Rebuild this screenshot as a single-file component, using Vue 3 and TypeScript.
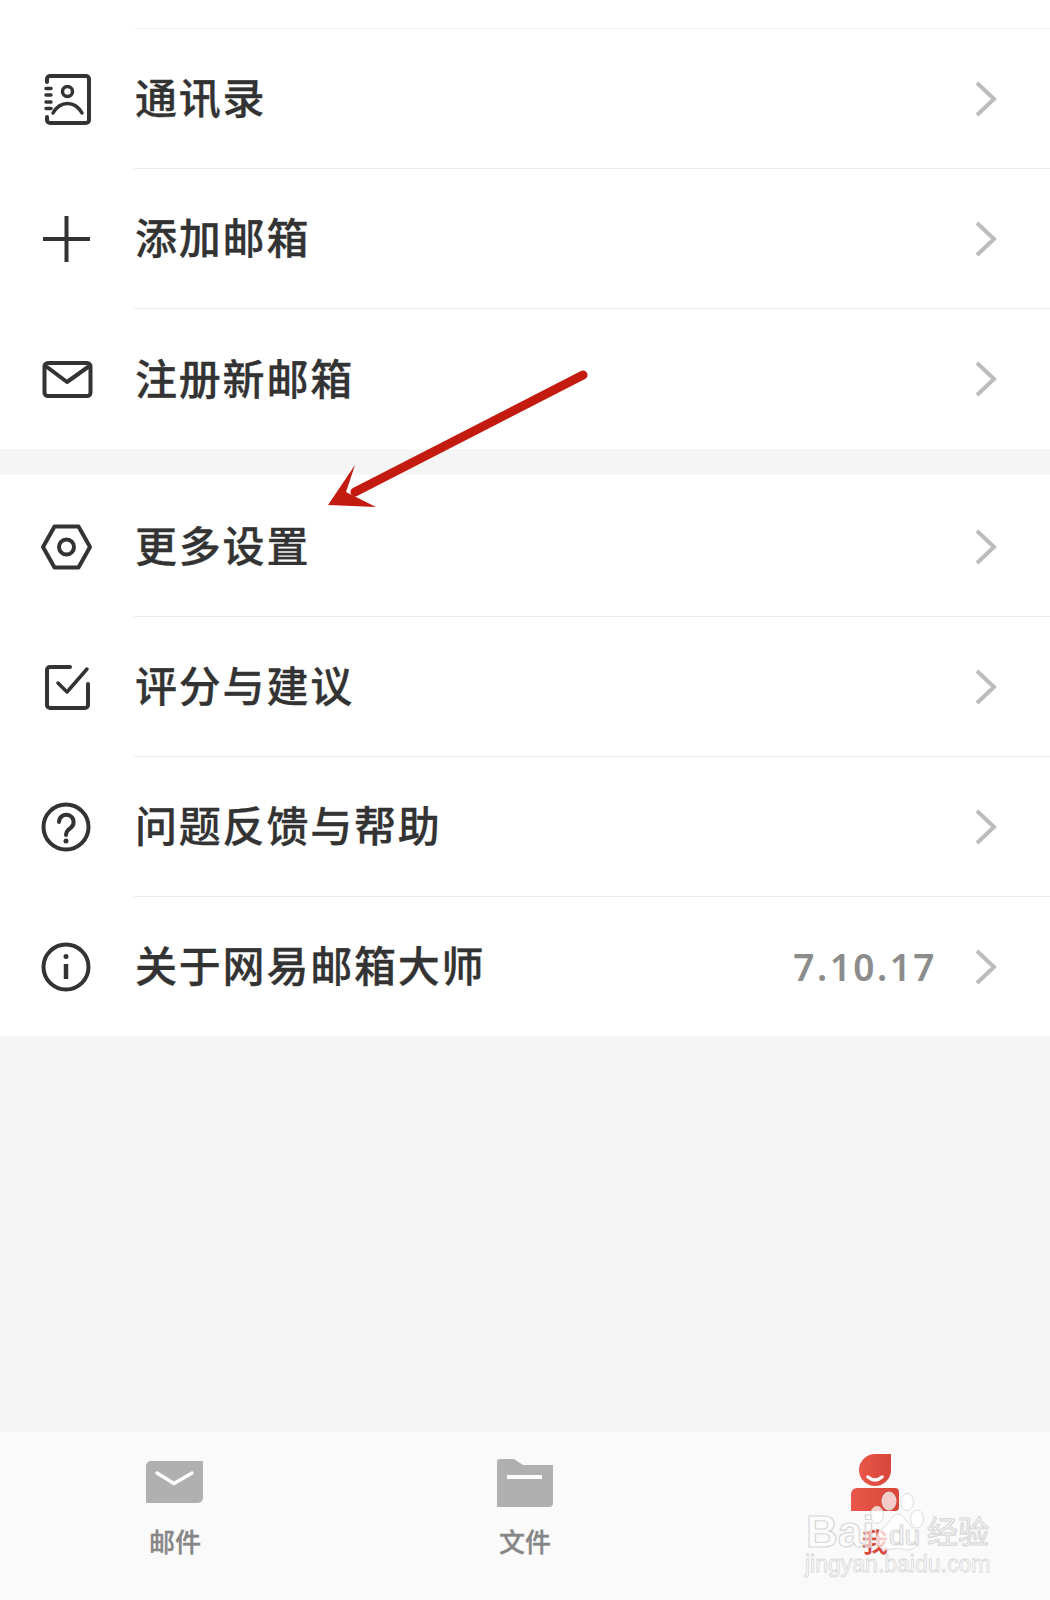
<script setup lang="ts">
interface MenuRow {
  icon: string;
  label: string;
  value?: string;
}

const topRows: MenuRow[] = [
  { icon: "contacts", label: "通讯录" },
  { icon: "plus", label: "添加邮箱" },
  { icon: "mail", label: "注册新邮箱" },
];

const bottomRows: MenuRow[] = [
  { icon: "settings", label: "更多设置" },
  { icon: "check", label: "评分与建议" },
  { icon: "help", label: "问题反馈与帮助" },
  { icon: "info", label: "关于网易邮箱大师", value: "7.10.17" },
];

const groups = [topRows, bottomRows];
</script>

<template>
  <div class="page">
    <div class="stub"><div class="stub-line"></div></div>

    <section v-for="(rows, g) in groups" :key="g" class="group">
      <div v-for="row in rows" :key="row.label" class="row">
        <svg class="row-icon" viewBox="0 0 60 60" fill="none" stroke="#333" stroke-width="4" stroke-linecap="round" stroke-linejoin="round">
          <template v-if="row.icon === 'contacts'">
            <path d="M11 13V10a3 3 0 0 1 3-3H50a3 3 0 0 1 3 3V51a3 3 0 0 1-3 3H14a3 3 0 0 1-3-3V48" />
            <path d="M10 19.500H15M10 26H15M10 33H15M10 39.500H15" stroke-width="3.500" />
            <circle cx="31.500" cy="22.500" r="5" stroke-width="3.500" />
            <path d="M17 44C21 37 26 34.500 31.500 34.500S42 37 46 44" stroke-width="3.500" />
          </template>
          <path v-else-if="row.icon === 'plus'" d="M7 30H54M30.500 7V53" stroke-linecap="butt" />
          <template v-else-if="row.icon === 'mail'">
            <rect x="8.500" y="14" width="46" height="33" rx="3.500" />
            <path d="M11 18L31 33L52 18" />
          </template>
          <template v-else-if="row.icon === 'settings'">
            <path d="M7 30L18.500 9.500H42.500L54 30L42.500 50.500H18.500Z" />
            <circle cx="30.500" cy="30" r="7.500" />
          </template>
          <template v-else-if="row.icon === 'check'">
            <path d="M34 10H14a3 3 0 0 0-3 3V48a3 3 0 0 0 3 3H49a3 3 0 0 0 3-3V27" />
            <path d="M22 26L31 35L51 12" stroke-width="3.500" />
          </template>
          <template v-else-if="row.icon === 'help'">
            <circle cx="30" cy="30" r="22.500" />
            <path d="M23 25a7.300 7.300 0 1 1 11.500 6C31.500 33 30 34.500 30 38" />
            <circle cx="30" cy="44" r="1.500" fill="#333" stroke-width="2" />
          </template>
          <template v-else>
            <circle cx="30" cy="30" r="22.500" />
            <circle cx="30" cy="19.500" r="1.500" fill="#333" stroke-width="2" />
            <path d="M30 27V42" stroke-width="4.500" stroke-linecap="butt" />
          </template>
        </svg>
        <div class="row-body">
          <span class="row-label">{{ row.label }}</span>
          <span v-if="row.value" class="row-value">{{ row.value }}</span>
          <svg class="chevron" viewBox="0 0 24 36" fill="none" stroke="#bcbcbc" stroke-width="4">
            <path d="M3 2L20 18L3 34" />
          </svg>
        </div>
      </div>
    </section>

    <div class="spacer"></div>

    <nav class="tabs">
      <div class="tab">
        <svg class="tab-icon" viewBox="0 0 60 60">
          <path d="M1 9H58V46a5 5 0 0 1-5 5H1V14a5 5 0 0 1 5-5Z" fill="#b0b0b0" />
          <path d="M12 21L29 31.500L47 21" fill="none" stroke="#fff" stroke-width="3.500" stroke-linecap="round" stroke-linejoin="round" />
        </svg>
        <span class="tab-label">邮件</span>
      </div>
      <div class="tab">
        <svg class="tab-icon" viewBox="0 0 60 60">
          <path d="M2 10a3 3 0 0 1 3-3H19L28 13H58V51a4 4 0 0 1-4 4H2Z" fill="#b0b0b0" />
          <path d="M12 25H47" stroke="#fff" stroke-width="4" />
        </svg>
        <span class="tab-label">文件</span>
      </div>
      <div class="tab">
        <svg class="tab-icon" viewBox="0 0 60 60">
          <defs>
            <linearGradient id="me" x1="0" x2="1" y1="0" y2="0">
              <stop offset="0" stop-color="#e9574a" />
              <stop offset="1" stop-color="#d8453a" />
            </linearGradient>
          </defs>
          <path d="M46 2V18A16 16 0 1 1 30 2Z" fill="url(#me)" />
          <path d="M23 25Q30 31 37 25" fill="none" stroke="#fff" stroke-width="3.500" stroke-linecap="round" />
          <path d="M6 59V42a6 6 0 0 1 6-6H50a4 4 0 0 1 4 4V55a4 4 0 0 1-4 4Z" fill="url(#me)" />
        </svg>
        <span class="tab-label tab-label-active">我</span>
      </div>
    </nav>

    <svg class="arrow" viewBox="0 0 300 170">
      <path d="M273 25L45 142" fill="none" stroke="#c41b10" stroke-width="9" stroke-linecap="round" />
      <path d="M18 155L45 115L36 142L66 157Z" fill="#c41b10" />
    </svg>

    <div class="watermark">
      <svg class="paw" viewBox="0 0 60 70">
        <g fill="#fff" fill-opacity="0.72" stroke="#dedede" stroke-width="1">
          <ellipse cx="19" cy="13" rx="7" ry="9" />
          <ellipse cx="37" cy="14" rx="6.500" ry="8.500" />
          <ellipse cx="7" cy="27" rx="6.500" ry="8.500" />
          <ellipse cx="47" cy="31" rx="6.500" ry="9" />
          <path d="M28 26C34 26 36 35 43 40C50 45 51 63 36 62C30 60 24 60 18 62C4 62 4 46 12 41C20 36 21 26 28 26Z" />
        </g>
      </svg>
      <span class="wm-bai">Bai</span>
      <span class="wm-du">du</span>
      <span class="wm-cn">经验</span>
      <span class="wm-url">jingyan.baidu.com</span>
    </div>
  </div>
</template>

<style>
html,
body {
  margin: 0;
  background: #fff;
}
</style>

<style scoped>
.page {
  position: relative;
  width: 1050px;
  height: 1600px;
  overflow: hidden;
  display: flex;
  flex-direction: column;
  background: #f5f5f5;
  font-family: "Noto Sans CJK SC", "Noto Sans", sans-serif;
  color: #333;
}

.stub {
  height: 29px;
  box-sizing: border-box;
  background: #fff;
  padding-left: 134px;
}

.stub-line {
  height: 29px;
  box-sizing: border-box;
  border-bottom: 1px solid #f1f1f1;
}

.group {
  background: #fff;
}

.group + .group {
  margin-top: 26px;
  padding-top: 2px;
}

.row {
  height: 140px;
  display: flex;
  align-items: center;
  padding-left: 36px;
}

.group + .group .row:last-child {
  height: 139px;
}

.row-icon {
  width: 60px;
  height: 60px;
  flex: none;
  margin-right: 38px;
}

.row-body {
  flex: 1;
  min-width: 0;
  height: 100%;
  box-sizing: border-box;
  display: flex;
  align-items: center;
  padding-right: 52px;
  border-bottom: 1px solid #eeeeee;
}

.row:last-child .row-body {
  border-bottom: none;
}

.row-label {
  flex: 1;
  margin-bottom: 5px;
  padding-left: 1px;
  font-size: 42px;
  font-weight: 500;
  letter-spacing: 1.800px;
  line-height: 60px;
  white-space: nowrap;
  -webkit-text-stroke: 0.3px #333;
}

.row-value {
  margin-right: 37px;
  font-family: "Noto Sans", sans-serif;
  font-size: 37px;
  font-weight: 600;
  letter-spacing: 2.500px;
  color: #8c8c8c;
}

.chevron {
  width: 24px;
  height: 36px;
  flex: none;
}

.spacer {
  flex: 1;
}

.tabs {
  height: 168px;
  display: grid;
  grid-template-columns: repeat(3, 1fr);
  background: #fafafa;
}

.tab {
  display: flex;
  flex-direction: column;
  align-items: center;
  padding-top: 20px;
}

.tab-icon {
  width: 60px;
  height: 60px;
}

.tab-label {
  margin-top: 11px;
  font-size: 26px;
  font-weight: 500;
  line-height: 36px;
  color: #868686;
  -webkit-text-stroke: 0.3px #868686;
}

.tab-label-active {
  color: #d8483e;
  -webkit-text-stroke: 0.3px #d8483e;
}

.arrow {
  position: absolute;
  left: 310px;
  top: 350px;
  width: 300px;
  height: 170px;
}

.watermark {
  position: absolute;
  left: 800px;
  top: 1485px;
  width: 200px;
  height: 95px;
  font-family: "Liberation Sans", sans-serif;
  color: rgba(255, 255, 255, 0.55);
  -webkit-text-stroke: 1.200px #d8d8d8;
}

.paw {
  position: absolute;
  left: 70px;
  top: 3px;
  width: 60px;
  height: 70px;
}

.wm-bai {
  position: absolute;
  left: 6px;
  top: 25px;
  font-size: 44px;
  line-height: 44px;
  font-weight: 700;
}

.wm-du {
  position: absolute;
  left: 89px;
  top: 37px;
  font-size: 28px;
  line-height: 28px;
}

.wm-cn {
  position: absolute;
  left: 127px;
  top: 27px;
  font-family: "Noto Sans CJK SC", sans-serif;
  font-size: 31px;
  line-height: 36px;
}

.wm-url {
  position: absolute;
  left: 5px;
  top: 66px;
  font-size: 23px;
  line-height: 26px;
  -webkit-text-stroke: 0.800px #d8d8d8;
}
</style>
